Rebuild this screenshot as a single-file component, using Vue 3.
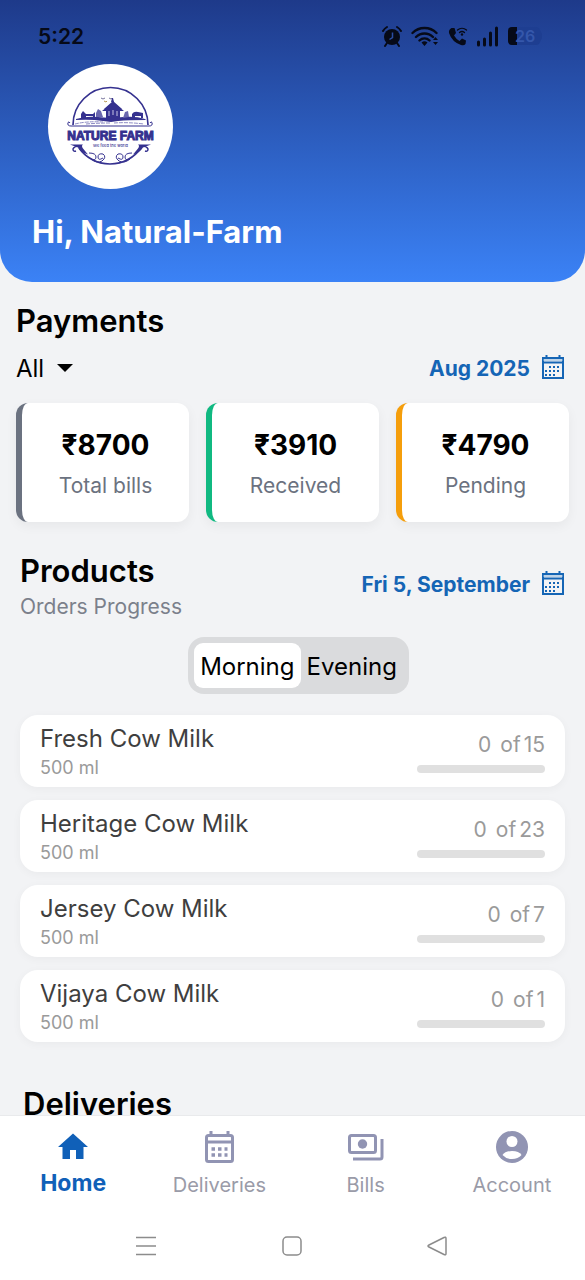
<template>
	<div class="app">
		<div class="scroll-area">
			<!-- Header -->
			<header class="header">
				<div class="status-bar">
					<span class="clock">5:22</span>
					<div class="status-icons">
						<svg width="22" height="22" viewBox="0 0 22 22">
							<circle cx="11" cy="12" r="8" fill="#060a18" />
							<path d="M2 6a12 12 0 0 1 4-4M20 6a12 12 0 0 0-4-4M6 18l-2 3M16 18l2 3" stroke="#060a18" stroke-width="2" stroke-linecap="round" fill="none" />
							<path d="M11.500 7.500v5l-3 2" stroke="#2a4da4" stroke-width="1.500" fill="none" />
						</svg>
						<svg width="29" height="22" viewBox="0 0 29 22">
							<path d="M1.500 8a17 17 0 0 1 24 0M5 12a12 12 0 0 1 17 0M8.500 15.500a7 7 0 0 1 10 0" fill="none" stroke="#060a18" stroke-width="2.400" stroke-linecap="round" />
							<path d="M10.500 17.500a4.500 4.500 0 0 1 6 0l-3 3.500zM22 15l2.500-3 2.500 3zM22 17l2.500 3 2.500-3z" fill="#060a18" />
						</svg>
						<svg width="20" height="22" viewBox="0 0 20 22">
							<path d="M3.500 3L6.500 3L8 8L6 10.500Q8 14 11.500 16L14 13.500L18 15.500L17.500 19Q16 21 13 20Q4 17 1 8Q.5 4.500 3.500 3Z" fill="#060a18" />
							<path d="M9.500 5a7 7 0 0 1 9 0M11.500 7.500a4 4 0 0 1 5 0" fill="none" stroke="#060a18" stroke-width="1.300" stroke-linecap="round" />
							<circle cx="14" cy="9.500" r="1.200" fill="#060a18" />
						</svg>
						<svg width="23" height="22" viewBox="0 0 23 22">
							<path d="M2.500 20v-3M8.500 20v-6M14.500 20V8M20.500 20V3" stroke="#060a18" stroke-width="3" stroke-linecap="round" />
						</svg>
						<svg class="battery" width="36" height="22" viewBox="0 0 36 22">
							<path d="M5 2h24q3 0 4 3l2 4v4l-2 4q-1 3-4 3H5q-4 0-4-4V6q0-4 4-4z" fill="#1e3e91" />
							<path d="M5 2h5v18H5q-4 0-4-4V6q0-4 4-4z" fill="#060a18" />
							<text x="8" y="17" font-size="16" fill="#3557ab">26</text>
						</svg>
					</div>
				</div>

				<div class="avatar">
					<svg width="125" height="125" viewBox="0 0 125 125" fill="none" stroke="#35318f">
						<path d="M25 61A37.500 37.500 0 0 1 100 61" stroke-width="1.700" />
						<path d="M31 84A38 38 0 0 0 93 84" stroke-width="1.700" />
						<path d="M20 58.500q-1 3.500 3 3.500H101q4 0 3-3.500M20 58.500q1-1.500 2 .5M104 58.500q-1-1.500-2 .5" stroke-width="1" />
						<!-- landscape -->
						<path d="M28 55q10-3 22-2l12 1 14-1q12-1 21 2l1 1q-18 0-28 1l-7 1-8-1q-12-2-27-1z" fill="#35318f" stroke="none" />
						<path d="M56 45l9-8 9 8h-2v11l-7 1-7-1V45z" fill="#35318f" stroke="none" />
						<path d="M64 34l1 0 1 4h-3zM54 47l11-9 11 9z" fill="#35318f" stroke="none" />
						<path d="M61 47v5M65 46v5M69 47v5" stroke="#c6c4e4" stroke-width="1" />
						<path d="M33 54v-4l2-3 3 3h7l2-2v6h-2v-2h-7v2zM84 54v-4q2-3 6-2l5 1v5h-2v-2h-6v2z" fill="#35318f" stroke="none" />
						<path d="M48 53v-4l2-4 3 2 2 6M75 54l2-6 3-1 1 6z" fill="#6a67ae" stroke="none" />
						<path d="M27 60q12-3 28-2M38 60q12-1 24-1M66 59q14-1 30 1" stroke="#8d8bc4" stroke-width="1" stroke-dasharray="4 1" />
						<path d="M53 34l2 1 2-1M61 34l2 1 1-1" stroke="#77759c" stroke-width="1" />
						<path d="M56 37l2 1 1-1" stroke="#b99a55" stroke-width="1" />
						<text class="logo-name" x="62.500" y="76" text-anchor="middle">NATURE FARM</text>
						<text class="logo-tagline" x="62.500" y="83" text-anchor="middle">We feed the world</text>
						<!-- scrolls -->
						<path d="M22 80.500h13q-2 1 0 4l5 6q-7-2-10-7zM103 80.500H90q2 1 0 4l-5 6q7-2 10-7z" fill="#35318f" stroke="none" />
						<path d="M32 82q-6 0-7 3 0 3 3 2M93 82q6 0 7 3 0 3-3 2" stroke-width="1.500" />
						<path d="M41 89q7 0 7 4t-5 2M43 95q6 5 11 2 5-4 1-7-5-1-5 3t5 1M84 89q-7 0-7 4t5 2M82 95q-6 5-11 2-5-4-1-7 5-1 5 3t-5 1" stroke-width="1" />
					</svg>
				</div>

				<h1 class="greeting">Hi, Natural-Farm</h1>
			</header>

			<main>
				<!-- Payments -->
				<section class="payments">
					<h2>Payments</h2>
					<div class="filter-row">
						<label class="filter">
							<select v-model="filter" aria-label="Payment filter">
								<option v-for="item in filters" :key="item">{{ item }}</option>
							</select>
							<svg width="16" height="8" viewBox="0 0 16 8"><path d="M0 0h16L8 8z" fill="#000" /></svg>
						</label>
						<button class="date-btn" type="button">
							<span>Aug 2025</span>
							<svg width="24" height="26" viewBox="0 0 24 26">
								<path d="M2 3h20v20H2zM1 7.500h22M5.500 0v4M18.500 0v4" fill="none" stroke="#1565b5" stroke-width="2" />
								<path d="M2 5h20" stroke="#8bb3da" stroke-width="1" />
								<path d="M8 12h12M4 16h16M4 20h12" stroke="#1565b5" stroke-width="2" stroke-dasharray="2 2" />
							</svg>
						</button>
					</div>
					<div class="cards">
						<div v-for="card in payments" :key="card.label" class="card" :class="card.type">
							<strong>₹{{ card.amount }}</strong>
							<span>{{ card.label }}</span>
						</div>
					</div>
				</section>

				<!-- Products -->
				<section class="products">
					<div class="products-head">
						<div>
							<h2>Products</h2>
							<p>Orders Progress</p>
						</div>
						<button class="date-btn" type="button">
							<span>Fri 5, September</span>
							<svg width="24" height="26" viewBox="0 0 24 26">
								<path d="M2 3h20v20H2zM1 7.500h22M5.500 0v4M18.500 0v4" fill="none" stroke="#1565b5" stroke-width="2" />
								<path d="M2 5h20" stroke="#8bb3da" stroke-width="1" />
								<path d="M8 12h12M4 16h16M4 20h12" stroke="#1565b5" stroke-width="2" stroke-dasharray="2 2" />
							</svg>
						</button>
					</div>

					<div class="toggle-row">
						<div class="toggle">
							<button
								v-for="slot in slots"
								:key="slot"
								type="button"
								:class="{ active: slot === currentSlot }"
								@click="currentSlot = slot"
							>{{ slot }}</button>
						</div>
					</div>

					<ul class="product-list">
						<li v-for="item in products" :key="item.name">
							<div class="product-info">
								<h3>{{ item.name }}</h3>
								<p>{{ item.size }}</p>
							</div>
							<div class="progress">
								<p><span>{{ item.done }}</span><span>of</span><span>{{ item.total }}</span></p>
								<div class="bar">
									<div class="bar-fill" :style="{ width: (item.done / item.total) * 100 + '%' }"></div>
								</div>
							</div>
						</li>
					</ul>
				</section>

				<!-- Deliveries -->
				<section class="deliveries">
					<h2>Deliveries</h2>
				</section>
			</main>
		</div>

		<!-- Bottom tabs -->
		<nav class="tabs">
			<a href="#home" class="active">
				<svg width="36" height="36" viewBox="0 0 24 24"><path d="M10 20v-6h4v6h5v-8h3L12 3 2 12h3v8z" fill="currentColor" /></svg>
				<span>Home</span>
			</a>
			<a href="#deliveries">
				<svg width="36" height="36" viewBox="0 0 36 36">
					<rect x="5.500" y="6.500" width="26" height="26" rx="2" fill="none" stroke="currentColor" stroke-width="3" />
					<path d="M5 13h27M10 2v5M27 2v5" stroke="currentColor" stroke-width="3" />
					<path d="M10.500 20h16M10.500 26h16" stroke="currentColor" stroke-width="3.500" stroke-dasharray="3.500 3" />
				</svg>
				<span>Deliveries</span>
			</a>
			<a href="#bills">
				<svg width="36" height="36" viewBox="0 0 36 36">
					<rect x="1.500" y="6.500" width="26" height="17" rx="2" fill="none" stroke="currentColor" stroke-width="3" />
					<circle cx="14.500" cy="15" r="4.700" fill="currentColor" />
					<path d="M5 30h27q2 0 2-2V10" fill="none" stroke="currentColor" stroke-width="3" />
				</svg>
				<span>Bills</span>
			</a>
			<a href="#account">
				<svg width="36" height="36" viewBox="0 0 36 36">
					<circle cx="18" cy="18" r="16" fill="currentColor" />
					<circle cx="18" cy="12.500" r="5.500" fill="#fff" />
					<path d="M8.500 26Q11 22 18 22t9.500 4Q24 30 18 30T8.500 26z" fill="#fff" />
				</svg>
				<span>Account</span>
			</a>
		</nav>

		<!-- System navigation -->
		<div class="system-nav">
			<button type="button" aria-label="Recent apps">
				<svg width="20" height="20" viewBox="0 0 20 20"><path d="M0 1.500h20M0 10h20M0 18.500h20" stroke="#8c8c8c" stroke-width="1.500" /></svg>
			</button>
			<button type="button" aria-label="Home screen">
				<svg width="20" height="20" viewBox="0 0 20 20"><rect x="1" y="1" width="18" height="18" rx="4" fill="none" stroke="#8c8c8c" stroke-width="1.500" /></svg>
			</button>
			<button type="button" aria-label="Back">
				<svg width="20" height="20" viewBox="0 0 20 20"><path d="M17 1.500Q19 .5 19 2.500v15q0 2-2 1L2 11q-2-1 0-2z" fill="none" stroke="#8c8c8c" stroke-width="1.500" stroke-linejoin="round" /></svg>
			</button>
		</div>
	</div>
</template>

<script setup>
	import {
		ref
	} from 'vue'

	const filters = ['All']
	const filter = ref('All')

	const payments = [
		{ amount: 8700, label: 'Total bills', type: 'total' },
		{ amount: 3910, label: 'Received', type: 'received' },
		{ amount: 4790, label: 'Pending', type: 'pending' }
	]

	const slots = ['Morning', 'Evening']
	const currentSlot = ref('Morning')

	const products = [
		{ name: 'Fresh Cow Milk', size: '500 ml', done: 0, total: 15 },
		{ name: 'Heritage Cow Milk', size: '500 ml', done: 0, total: 23 },
		{ name: 'Jersey Cow Milk', size: '500 ml', done: 0, total: 7 },
		{ name: 'Vijaya Cow Milk', size: '500 ml', done: 0, total: 1 }
	]
</script>

<style>
	body {
		margin: 0;
		background: #f2f3f5;
	}
</style>

<style scoped>
	* {
		box-sizing: border-box;
	}

	.app {
		display: flex;
		flex-direction: column;
		height: 100vh;
		background: #f2f3f5;
		color: #000;
		font-family: Inter, "Noto Sans", sans-serif;
	}

	.scroll-area {
		flex: 1;
		min-height: 0;
		overflow-y: auto;
		scrollbar-width: none;
	}

	h1,
	h2,
	h3,
	p,
	ul {
		margin: 0;
		padding: 0;
	}

	button {
		border: none;
		background: none;
		padding: 0;
		font-family: inherit;
		color: inherit;
		cursor: pointer;
	}

	svg {
		display: block;
		flex-shrink: 0;
	}

	.header {
		padding: 24px 32px 30px;
		border-radius: 0 0 32px 32px;
		background: linear-gradient(#1e3a8a, #3b82f6);
	}

	.status-bar {
		display: flex;
		justify-content: space-between;
		align-items: center;
		height: 24px;
		padding: 0 10px 0 6px;
	}

	.clock {
		color: #060a18;
		font-size: 21px;
		font-weight: 600;
	}

	.status-icons {
		display: flex;
		align-items: center;
		gap: 8px;
	}

	.battery {
		font-weight: 600;
	}

	.avatar {
		width: 125px;
		height: 125px;
		margin: 16px 0 0 16px;
		border-radius: 50%;
		background: #fff;
	}

	.logo-name {
		fill: #35318f;
		stroke: #35318f;
		stroke-width: 1px;
		font-family: "Liberation Sans Narrow", "Liberation Sans", sans-serif;
		font-size: 12px;
		font-weight: 700;
	}

	.logo-tagline {
		fill: #35318f;
		stroke: none;
		font-size: 4px;
		font-weight: 500;
	}

	.greeting {
		margin-top: 23px;
		color: #fff;
		font-size: 31px;
		font-weight: 700;
		line-height: 40px;
	}

	h2 {
		font-size: 31px;
		font-weight: 600;
		line-height: 40px;
	}

	.payments {
		padding: 19px 16px 0;
	}

	.filter-row {
		display: flex;
		justify-content: space-between;
		align-items: center;
		height: 54px;
		padding-right: 4px;
	}

	.filter {
		display: flex;
		align-items: center;
		gap: 12px;
	}

	.filter select {
		appearance: none;
		border: none;
		background: none;
		padding: 0;
		color: #000;
		font-family: inherit;
		font-size: 24px;
	}

	.date-btn {
		display: flex;
		align-items: center;
		gap: 11px;
		color: #1565b5;
		font-size: 21px;
		font-weight: 700;
	}

	.cards {
		display: flex;
		gap: 17px;
		margin-top: 8px;
	}

	.card {
		flex: 1;
		display: flex;
		flex-direction: column;
		align-items: center;
		gap: 8px;
		padding: 24px 0 22px;
		border-left: 6px solid #6b7280;
		border-radius: 12px;
		background: #fff;
		box-shadow: 0 4px 12px rgba(0, 0, 0, 0.05);
	}

	.card.received {
		border-left-color: #10b981;
	}

	.card.pending {
		border-left-color: #f59e0b;
	}

	.card strong {
		font-size: 28px;
		font-weight: 700;
		line-height: 37px;
	}

	.card span {
		color: #6b7280;
		font-size: 21px;
		line-height: 28px;
	}

	.products {
		padding: 29px 20px 0;
	}

	.products-head {
		display: flex;
		justify-content: space-between;
		align-items: flex-start;
	}

	.products-head .date-btn {
		margin-top: 20px;
	}

	.products-head p {
		color: #7b808b;
		font-size: 21px;
		line-height: 32px;
	}

	.toggle-row {
		display: flex;
		justify-content: center;
		margin-top: 14px;
		padding-left: 12px;
	}

	.toggle {
		display: flex;
		padding: 6px;
		border-radius: 16px;
		background: #dadbdd;
	}

	.toggle button {
		height: 45px;
		padding: 2px 6px 0;
		border-radius: 9px;
		font-size: 24px;
	}

	.toggle button.active {
		background: #fff;
	}

	.product-list {
		display: flex;
		flex-direction: column;
		gap: 13px;
		margin-top: 21px;
		list-style: none;
	}

	.product-list li {
		display: flex;
		justify-content: space-between;
		align-items: center;
		height: 72px;
		padding: 2px 20px 0;
		border-radius: 18px;
		background: #fff;
		box-shadow: 0 2px 10px rgba(0, 0, 0, 0.04);
	}

	.product-info h3 {
		color: #3f3f3f;
		font-size: 24px;
		font-weight: 400;
		line-height: 32px;
	}

	.product-info p {
		color: #9a9a9a;
		font-size: 18px;
		line-height: 26px;
	}

	.progress {
		width: 128px;
	}

	.progress p {
		display: flex;
		justify-content: flex-end;
		gap: 3px;
		color: #9a9a9a;
		font-size: 21px;
		line-height: 28px;
	}

	.progress p span:first-child {
		margin-right: 6px;
	}

	.bar {
		height: 8px;
		margin-top: 6px;
		border-radius: 4px;
		background: #e0e0e0;
		overflow: hidden;
	}

	.bar-fill {
		height: 100%;
		background: #1565b5;
	}

	.deliveries {
		padding: 42px 23px 24px;
	}

	.tabs {
		display: flex;
		padding-top: 13px;
		border-top: 1px solid #e9eaec;
		background: #fff;
	}

	.tabs a {
		flex: 1;
		display: flex;
		flex-direction: column;
		align-items: center;
		gap: 6px;
		color: #9194b3;
		font-size: 20px;
		line-height: 28px;
		text-decoration: none;
	}

	.tabs a span {
		color: #9a9ba8;
	}

	.tabs a.active,
	.tabs a.active span {
		color: #1060b8;
	}

	.tabs a.active {
		gap: 4px;
		font-size: 23px;
		font-weight: 700;
	}

	.system-nav {
		display: flex;
		justify-content: space-between;
		align-items: center;
		height: 81px;
		padding: 12px 138px 0 136px;
		background: #fff;
	}
</style>
